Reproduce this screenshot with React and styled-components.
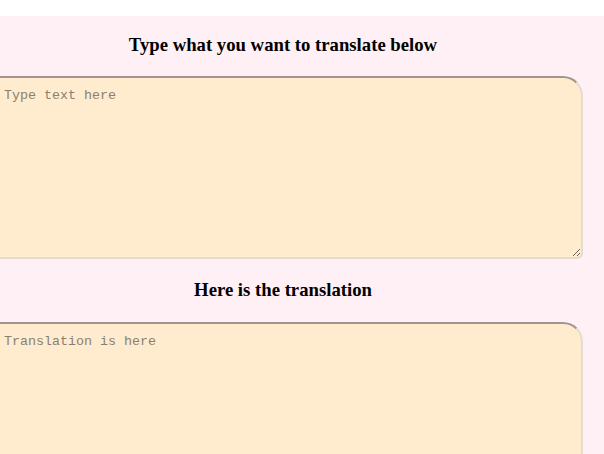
import React from "react";
import styled, { createGlobalStyle } from "styled-components";

const Global = createGlobalStyle`
  html, body { margin: 0; padding: 0; background: #ffffff; overflow: hidden; }
  body { font-family: "Liberation Serif", "Times New Roman", serif; }
`;

const Page = styled.main`
  margin-top: 16px;
  background: #fff0f5;
  min-height: 438px;
  padding: 1px 0 0;
  overflow: hidden;
`;

const Column = styled.div`
  width: 600px;
  margin-left: -17px;
  display: flex;
  flex-direction: column;
`;

const Heading = styled.h3`
  font-family: "Liberation Serif", "Times New Roman", serif;
  font-weight: bold;
  font-size: 18.72px;
  line-height: 21.5px;
  text-align: center;
  color: #000;
  margin: ${(p) => p.$top}px 0 ${(p) => p.$bottom}px;
`;

const Box = styled.textarea`
  display: block;
  box-sizing: border-box;
  width: 600px;
  height: ${(p) => p.$height}px;
  background: #ffebcd;
  border-style: solid;
  border-width: 2px;
  border-color: #a0968f #e4dcd2 #e4dcd2 #a0968f;
  border-radius: 0 20px 6px 0;
  padding: 10px 8px 8px 19px;
  font-family: "Liberation Mono", "Courier New", monospace;
  font-size: 13.333px;
  line-height: 15px;
  color: #333;
  outline: none;
  &::placeholder { color: #8a7f72; }
`;

export default function App() {
  return (
    <>
      <Global />
      <Page>
        <Column>
          <Heading $top={17} $bottom={20}>Type what you want to translate below</Heading>
          <Box $height={183} placeholder="Type text here" />
          <Heading $top={20} $bottom={22}>Here is the translation</Heading>
          <Box $height={200} placeholder="Translation is here" readOnly />
        </Column>
      </Page>
    </>
  );
}
